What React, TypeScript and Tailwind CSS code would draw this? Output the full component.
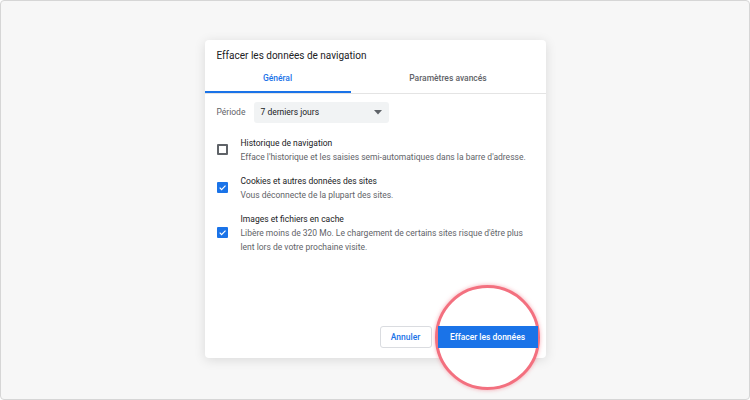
const font = { fontFamily: "Roboto, 'Liberation Sans', sans-serif" };

function Check({ checked }: { checked: boolean }) {
  if (!checked) {
    return <div className="h-[11px] w-[11px] rounded-[1px] border-2 border-[#5f6368]" />;
  }
  return (
    <div className="flex h-[11px] w-[11px] items-center justify-center rounded-[1px] bg-[#1a73e8]">
      <svg width="9" height="9" viewBox="0 0 24 24" fill="none">
        <path d="M4.5 12.5l5 5L20 7" stroke="white" strokeWidth="3.2" />
      </svg>
    </div>
  );
}

function Option({
  checked,
  title,
  desc,
}: {
  checked: boolean;
  title: string;
  desc: string;
}) {
  return (
    <div className="flex items-center">
      <div className="w-[24px] shrink-0">
        <Check checked={checked} />
      </div>
      <div className="flex-1">
        <div className="text-[8.5px] leading-[14px] text-[#202124]">{title}</div>
        <div className="text-[8.5px] leading-[14px] text-[#5f6368]">{desc}</div>
      </div>
    </div>
  );
}

export default function App() {
  return (
    <div
      className="relative flex h-[400px] w-[750px] justify-center rounded-[4px] border border-[#d6d6d6] bg-[#f7f7f7] pt-[39px]"
      style={font}
    >
      <div className="flex h-[318px] w-[341px] flex-col rounded-[4px] bg-white shadow-[0_2px_12px_rgba(0,0,0,0.12)]">
        <div className="px-3 pt-[8px] text-[10px] leading-[16px] text-[#202124]">
          Effacer les données de navigation
        </div>
        <div className="mt-[5px] flex border-b border-[#e4e4e4] text-[8.5px]">
          <div className="w-[146px] border-b-2 border-[#1a73e8] pb-[6px] pt-[3px] text-center font-medium text-[#1a73e8]">
            Général
          </div>
          <div className="flex-1 pb-[6px] pt-[3px] text-center font-medium text-[#5f6368]">
            Paramètres avancés
          </div>
        </div>

        <div className="flex items-center px-3 pt-[8px]">
          <span className="w-[37px] text-[8.5px] text-[#5f6368]">Période</span>
          <div className="flex h-[21px] w-[135px] items-center justify-between rounded-[3px] bg-[#f1f3f4] px-[7px] text-[8.5px] text-[#202124]">
            <span>7 derniers jours</span>
            <svg width="8" height="5" viewBox="0 0 8 5">
              <path d="M0 0h8L4 4.5z" fill="#5f6368" />
            </svg>
          </div>
        </div>

        <div className="flex flex-col gap-[10px] pl-3 pr-[14px] pt-[13px]">
          <Option
            checked={false}
            title="Historique de navigation"
            desc="Efface l'historique et les saisies semi-automatiques dans la barre d'adresse."
          />
          <Option
            checked
            title="Cookies et autres données des sites"
            desc="Vous déconnecte de la plupart des sites."
          />
          <Option
            checked
            title="Images et fichiers en cache"
            desc="Libère moins de 320 Mo. Le chargement de certains sites risque d'être plus lent lors de votre prochaine visite."
          />
        </div>

        <div className="mt-auto flex justify-end gap-[6px] pb-[10px] pr-[8px]">
          <button className="h-[22px] w-[52px] rounded-[3px] border border-[#dadce0] text-[8.5px] font-medium text-[#1a73e8]">
            Annuler
          </button>
          <button className="relative z-20 h-[22px] w-[100px] bg-[#1a73e8] text-[8.5px] font-medium text-white">
            Effacer les données
          </button>
        </div>
      </div>

      <div className="absolute left-[434px] top-[284px] z-10 h-[105px] w-[105px] rounded-full border-[3px] border-[#f3707f] bg-white shadow-[0_0_4px_rgba(243,112,127,0.6)]" />
    </div>
  );
}
